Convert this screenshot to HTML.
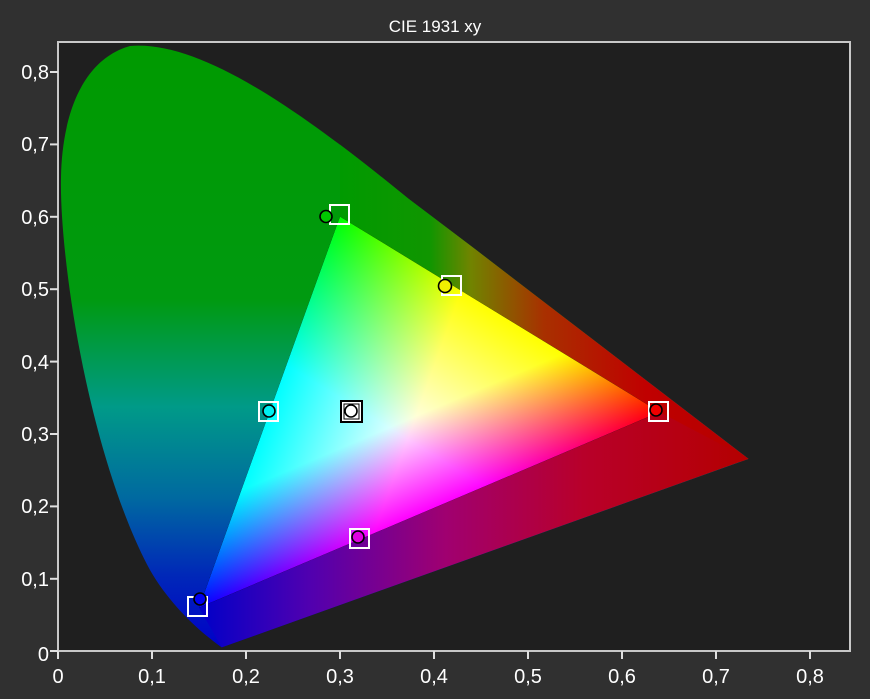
<!DOCTYPE html>
<html><head><meta charset="utf-8">
<style>
html,body{margin:0;padding:0;background:#303030;}
svg{display:block;}
text{font-family:"Liberation Sans","DejaVu Sans",sans-serif;fill:#fff;}
</style></head>
<body>
<svg width="870" height="699" viewBox="0 0 870 699" xmlns="http://www.w3.org/2000/svg">
<defs>
<clipPath id="loc"><path d="M221.7,647.4 C200,632 170,605 150,570 C120,515 95,430 80,352 C68,290 60,220 61,177 C62,120 80,60 130,46 C200,40 300,110 408.7,198.9 L475.5,249.4 L539.8,298.7 L598.7,343.9 L647.4,381.3 L708,427.8 L748.6,458.9 Z"/></clipPath>
<linearGradient id="hs" gradientUnits="userSpaceOnUse" x1="0" y1="47" x2="0" y2="647">
<stop offset="0" stop-color="#009a00"/>
<stop offset="0.42" stop-color="#009a10"/>
<stop offset="0.6" stop-color="#009a88"/>
<stop offset="0.75" stop-color="#006aa0"/>
<stop offset="0.88" stop-color="#0028b8"/>
<stop offset="1" stop-color="#0000c8"/>
</linearGradient>
<linearGradient id="wedge" gradientUnits="userSpaceOnUse" x1="340" y1="0" x2="748" y2="0">
<stop offset="0" stop-color="#009a00"/>
<stop offset="0.22" stop-color="#109600"/>
<stop offset="0.32" stop-color="#708400"/>
<stop offset="0.5" stop-color="#a83000"/>
<stop offset="0.75" stop-color="#c00000"/>
<stop offset="1" stop-color="#b40000"/>
</linearGradient>
<linearGradient id="bot" gradientUnits="userSpaceOnUse" x1="199" y1="0" x2="748" y2="0">
<stop offset="0" stop-color="#0000c8"/>
<stop offset="0.2" stop-color="#5000b0"/>
<stop offset="0.45" stop-color="#a00070"/>
<stop offset="0.7" stop-color="#b8002a"/>
<stop offset="1" stop-color="#b40000"/>
</linearGradient>
<linearGradient id="gR" gradientUnits="userSpaceOnUse" x1="314.4" y1="287.6" x2="659.6" y2="412.1">
<stop offset="0" stop-color="#000"/><stop offset="0.38" stop-color="#f00"/><stop offset="1" stop-color="#f00"/>
</linearGradient>
<linearGradient id="gG" gradientUnits="userSpaceOnUse" x1="459.1" y1="497.2" x2="340" y2="216.6">
<stop offset="0" stop-color="#000"/><stop offset="0.3" stop-color="#0f0"/><stop offset="1" stop-color="#0f0"/>
</linearGradient>
<linearGradient id="gB" gradientUnits="userSpaceOnUse" x1="411.4" y1="260.3" x2="199" y2="607.6">
<stop offset="0" stop-color="#000"/><stop offset="0.38" stop-color="#00f"/><stop offset="1" stop-color="#00f"/>
</linearGradient>
</defs>

<text x="435" y="32" font-size="17" text-anchor="middle">CIE 1931 xy</text>

<rect x="58" y="42" width="792" height="609" fill="#1f1f1f" stroke="#c8c8c8" stroke-width="2"/>

<g clip-path="url(#loc)">
<rect x="58" y="42" width="792" height="609" fill="url(#hs)"/>
<polygon fill="url(#wedge)" points="340,216.6 340,40 800,40 800,498"/>
<polygon fill="url(#bot)" points="199,607.6 221.7,647.4 748.6,458.9 659.6,412.1"/>
</g>

<g style="isolation:isolate">
<polygon points="659.6,412.1 340,216.6 199,607.6" fill="#000"/>
<polygon points="659.6,412.1 340,216.6 199,607.6" fill="url(#gR)" style="mix-blend-mode:screen"/>
<polygon points="659.6,412.1 340,216.6 199,607.6" fill="url(#gG)" style="mix-blend-mode:screen"/>
<polygon points="659.6,412.1 340,216.6 199,607.6" fill="url(#gB)" style="mix-blend-mode:screen"/>
</g>

<g fill="none" stroke="#fff" stroke-width="2">
<rect x="330" y="205" width="19" height="19"/>
<rect x="442" y="276" width="19" height="19"/>
<rect x="649" y="402" width="19" height="19"/>
<rect x="259" y="402" width="19" height="19"/>
<rect x="350" y="529" width="19" height="19"/>
<rect x="188" y="597" width="19" height="19"/>
</g>
<rect x="341" y="401" width="21" height="21" fill="#fff" stroke="#000" stroke-width="2"/>
<rect x="344" y="404" width="15" height="15" fill="none" stroke="#000" stroke-width="1"/>
<g stroke="#000" stroke-width="1.6">
<circle cx="326" cy="216.5" r="6" fill="#00c800"/>
<circle cx="445" cy="286" r="6.5" fill="#f0f000"/>
<circle cx="656" cy="410" r="6" fill="#f00000"/>
<circle cx="269" cy="411" r="6" fill="#00f0f0"/>
<circle cx="351" cy="411" r="6" fill="#fff"/>
<circle cx="358" cy="537" r="6" fill="#e000e0"/>
<circle cx="200" cy="599" r="6" fill="#0000f0"/>
</g>

<g stroke="#e0e0e0" stroke-width="2">
<line x1="50" y1="72" x2="58" y2="72"/><line x1="50" y1="144.4" x2="58" y2="144.4"/>
<line x1="50" y1="216.8" x2="58" y2="216.8"/><line x1="50" y1="289.2" x2="58" y2="289.2"/>
<line x1="50" y1="361.6" x2="58" y2="361.6"/><line x1="50" y1="434" x2="58" y2="434"/>
<line x1="50" y1="506.4" x2="58" y2="506.4"/><line x1="50" y1="578.8" x2="58" y2="578.8"/>
<line x1="50" y1="651" x2="58" y2="651"/>
<line x1="58" y1="651" x2="58" y2="659"/><line x1="152" y1="651" x2="152" y2="659"/>
<line x1="246" y1="651" x2="246" y2="659"/><line x1="340" y1="651" x2="340" y2="659"/>
<line x1="434" y1="651" x2="434" y2="659"/><line x1="528" y1="651" x2="528" y2="659"/>
<line x1="622" y1="651" x2="622" y2="659"/><line x1="716" y1="651" x2="716" y2="659"/>
<line x1="810" y1="651" x2="810" y2="659"/>
</g>
<g font-size="20" text-anchor="end">
<text x="49" y="79">0,8</text><text x="49" y="151">0,7</text>
<text x="49" y="224">0,6</text><text x="49" y="296">0,5</text>
<text x="49" y="369">0,4</text><text x="49" y="441">0,3</text>
<text x="49" y="513">0,2</text><text x="49" y="586">0,1</text>
<text x="49" y="661">0</text>
</g>
<g font-size="20" text-anchor="middle">
<text x="58" y="683">0</text><text x="152" y="683">0,1</text>
<text x="246" y="683">0,2</text><text x="340" y="683">0,3</text>
<text x="434" y="683">0,4</text><text x="528" y="683">0,5</text>
<text x="622" y="683">0,6</text><text x="716" y="683">0,7</text>
<text x="810" y="683">0,8</text>
</g>
</svg>
</body></html>
